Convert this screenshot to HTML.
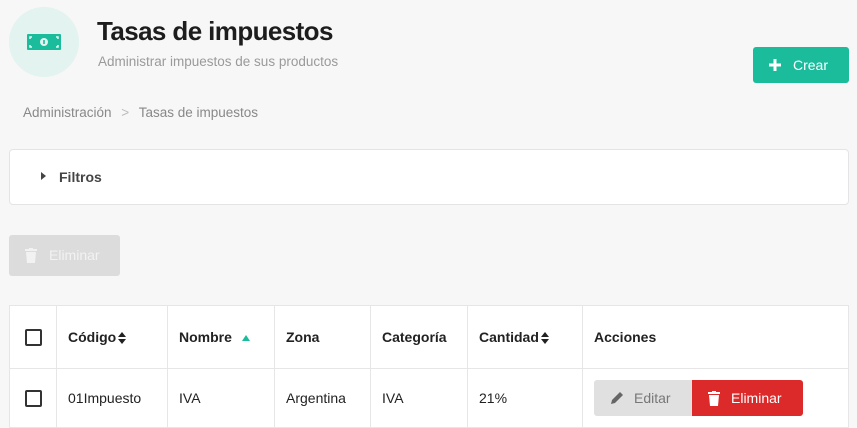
<!DOCTYPE html>
<html><head><meta charset="utf-8"><style>
*{box-sizing:border-box;margin:0;padding:0}
body{width:857px;height:428px;background:#f7f7f7;font-family:"Liberation Sans",sans-serif;position:relative;overflow:hidden;color:#222}
.abs{position:absolute}
.circle{left:9px;top:7px;width:70px;height:70px;border-radius:50%;background:#e2f3f0}
.sub{left:98px;top:54px;font-size:13.5px;color:#9a9a9a}
.crear{left:753px;top:47px;width:96px;height:36px;background:#1abc9c;border-radius:3px;color:#fff;font-size:14px;line-height:36px;padding-left:40px}
.bc{left:23px;top:105px;font-size:13.5px;color:#888}
.card{left:9px;top:149px;width:840px;height:56px;background:#fff;border:1px solid #e4e4e4;border-radius:4px}
.dis{left:9px;top:235px;width:111px;height:41px;background:#dcdcdc;border-radius:3px;color:#f2f2f2;font-size:14px;line-height:41px;padding-left:40px}
table{position:absolute;left:9px;top:305px;width:840px;border-collapse:collapse;background:#fff;font-size:14px;border:1px solid #e6e6e6}
td{border:1px solid #e6e6e6;padding-left:11px;vertical-align:middle}
tr.h td{height:63px;font-weight:bold;color:#222}
tr.r td{height:59px;color:#222}
.cb{display:inline-block;width:17px;height:17px;border:2px solid #333;border-radius:2px;margin-left:4px;vertical-align:middle}
.edit{display:inline-block;width:98px;height:36px;background:#e0e0e0;border-radius:3px 0 0 3px;color:#777;line-height:36px;padding-left:40px;position:relative;vertical-align:middle}
.del{display:inline-block;width:111px;height:36px;background:#dc2a2a;border-radius:0 3px 3px 0;color:#fff;line-height:36px;padding-left:39px;position:relative;vertical-align:middle}
.srt{display:inline-block;vertical-align:middle;margin-left:2px}
</style></head><body>
<div class="abs circle"></div>
<svg class="abs" style="left:27px;top:34px" width="34" height="16" viewBox="0 0 34 16"><rect width="34" height="16" rx="1" fill="#1abc9c"/><circle cx="17" cy="8" r="4" fill="#e2f3f0"/><rect x="16.2" y="6" width="1.6" height="4" fill="#1abc9c"/><path d="M3 5V3h2M29 3h2v2M31 11v2h-2M5 13H3v-2" stroke="#e2f3f0" stroke-width="1.5" fill="none"/></svg>
<div class="abs" style="left:97px;top:16px;font-size:26px;font-weight:bold;color:#1d1d1d;letter-spacing:-0.6px">Tasas de impuestos</div>
<div class="abs sub">Administrar impuestos de sus productos</div>
<div class="abs crear">Crear</div>
<svg class="abs" style="left:769px;top:59px" width="12" height="12"><path d="M6 0v12M0 6h12" stroke="#fff" stroke-width="3"/></svg>
<div class="abs bc">Administración <span style="color:#bbb;margin:0 6px">&gt;</span> Tasas de impuestos</div>
<div class="abs card"></div>
<svg class="abs" style="left:41px;top:172px" width="5" height="8"><path d="M0 0L5 4L0 8Z" fill="#444"/></svg>
<div class="abs" style="left:59px;top:169px;font-size:14px;font-weight:bold;color:#444">Filtros</div>
<div class="abs dis">Eliminar</div>
<svg class="abs" style="left:25px;top:248px" width="12" height="15"><rect x="0" y="1" width="12" height="2" fill="#f2f2f2"/><rect x="4" y="0" width="4" height="2" fill="#f2f2f2"/><path d="M1 4h10l-1 11H2z" fill="#f2f2f2"/></svg>
<table>
<tr class="h"><td style="width:47px"><span class="cb"></span></td><td style="width:111px">Código<svg class="srt" width="8" height="12"><path d="M0 5L4 0L8 5ZM0 7L4 12L8 7Z" fill="#222"/></svg></td><td style="width:107px">Nombre <svg style="margin-left:6px;vertical-align:middle" width="8" height="6"><path d="M0 6L4 0L8 6Z" fill="#1abc9c"/></svg></td><td style="width:96px">Zona</td><td style="width:97px">Categoría</td><td style="width:115px">Cantidad<svg class="srt" width="8" height="12"><path d="M0 5L4 0L8 5ZM0 7L4 12L8 7Z" fill="#222"/></svg></td><td>Acciones</td></tr>
<tr class="r"><td><span class="cb"></span></td><td>01Impuesto</td><td>IVA</td><td>Argentina</td><td>IVA</td><td>21%</td><td><span class="edit"><svg style="position:absolute;left:16px;top:11px" width="14" height="14"><path d="M1 13l1-4 8-8 3 3-8 8z" fill="#666"/></svg>Editar</span><span class="del"><svg style="position:absolute;left:16px;top:11px" width="12" height="15"><rect x="0" y="1" width="12" height="2" fill="#fff"/><rect x="4" y="0" width="4" height="2" fill="#fff"/><path d="M1 4h10l-1 11H2z" fill="#fff"/></svg>Eliminar</span></td></tr>
</table>
</body></html>
